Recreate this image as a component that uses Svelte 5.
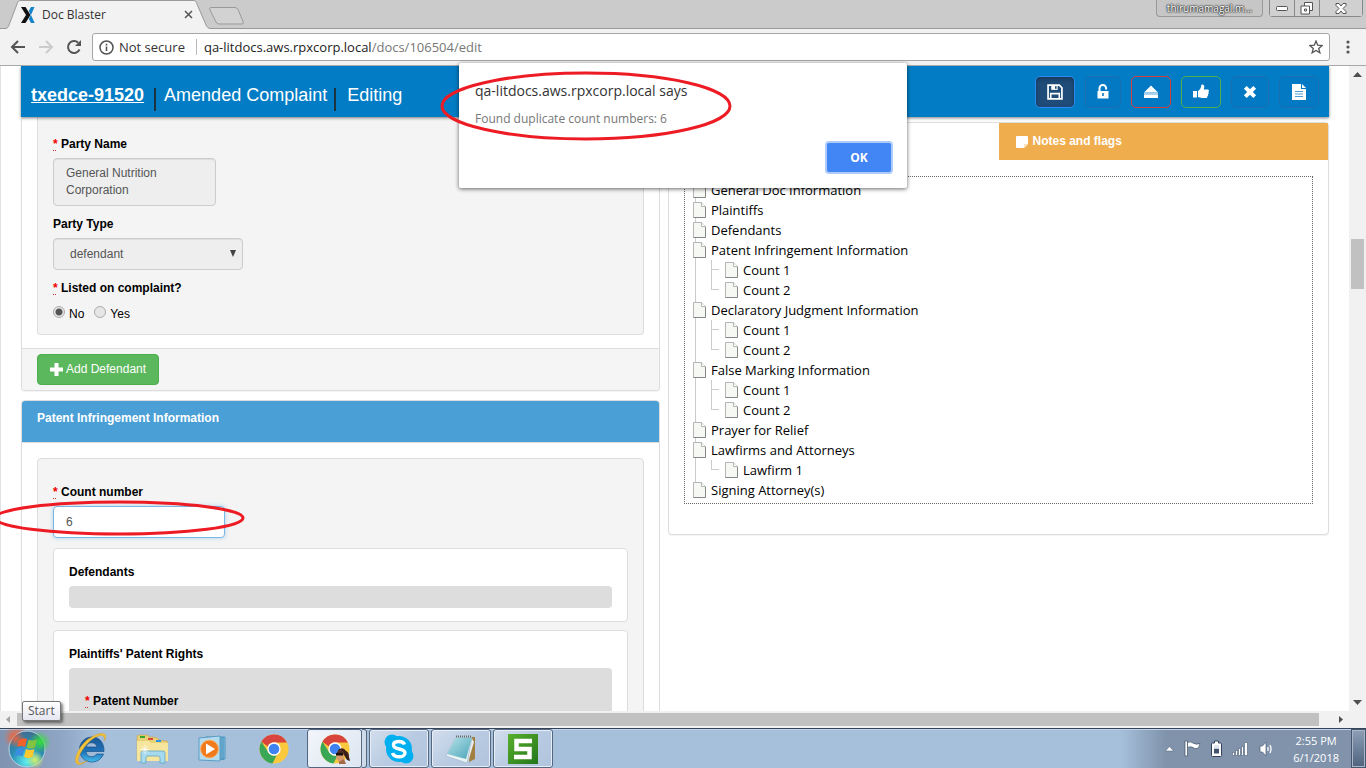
<script>
  const tree = [
    { label: 'General Doc Information', children: [] },
    { label: 'Plaintiffs', children: [] },
    { label: 'Defendants', children: [] },
    { label: 'Patent Infringement Information', children: ['Count 1', 'Count 2'] },
    { label: 'Declaratory Judgment Information', children: ['Count 1', 'Count 2'] },
    { label: 'False Marking Information', children: ['Count 1', 'Count 2'] },
    { label: 'Prayer for Relief', children: [] },
    { label: 'Lawfirms and Attorneys', children: ['Lawfirm 1'] },
    { label: 'Signing Attorney(s)', children: [] }
  ];
  let listed = $state('No');
  let countNumber = $state('6');
</script>

{#snippet page()}
  <svg class="leaf" width="13" height="16" viewBox="0 0 13 16">
    <path d="M.5.5h8l4 4v11H.5z" fill="#f6f8f3" stroke="#b5b5b5" />
    <path d="M.5 15.5h12V5" fill="none" stroke="#868686" />
    <path d="M8.500 .5v4h4" fill="#fff" stroke="#b5b5b5" />
  </svg>
{/snippet}

{#snippet chrome()}
  <svg width="30" height="30" viewBox="0 0 30 30">
    <circle cx="15" cy="15" r="14.500" fill="#fbc93d" />
    <path d="M2.440 7.750A14.500 14.500 0 0 1 27.900 8.400H15a6.600 6.600 0 0 0-6.100 4.100z" fill="#d9453c" />
    <path d="M2.440 7.750 9.300 18.300a6.600 6.600 0 0 0 8.500 2.700l-4.300 8.420A14.500 14.500 0 0 1 2.440 7.750z" fill="#3aa757" />
    <circle cx="15" cy="15" r="6.700" fill="#fff" />
    <circle cx="15" cy="15" r="5.300" fill="#3f83f3" />
  </svg>
{/snippet}

<div class="screen">
  <header class="tabstrip">
    <div class="tab">
      <svg class="tabshape" width="206" height="29" viewBox="0 0 206 29">
        <path d="M0 28.500C3 28.500 3 27 4 25L12 4C13 1 14 .5 16 .5H188C190 .5 191 1 192 4L201 25C202 27 203 28.500 206 28.500V29H0z" fill="#f2f2f2" />
        <path d="M0 28.500C3 28.500 3 27 4 25L12 4C13 1 14 .5 16 .5H188C190 .5 191 1 192 4L201 25C202 27 203 28.500 206 28.500" fill="none" stroke="#999" />
      </svg>
      <svg width="15" height="16" viewBox="0 0 15 16">
        <path d="M0 0h4.500l5 8-5 8H0l5-8z" fill="#111" />
        <path d="M13.500 0H10L7.800 4l2 4-2 4 2.200 4h3.700L10 8z" fill="#1583c9" />
      </svg>
      <span class="tabname">Doc Blaster</span>
      <button class="plain" aria-label="Close tab">
        <svg width="9" height="9" viewBox="0 0 9 9"><path d="M1 1l7 7M8 1L1 8" stroke="#555" stroke-width="1.500" /></svg>
      </button>
    </div>
    <button class="plain newtab" aria-label="New tab">
      <svg width="35" height="18" viewBox="0 0 35 18"><path d="M2 .5h24q2 0 3 2l5 12q1 2.500-1 2.500H10q-2 0-3-2L1 3Q0 .5 2 .5z" fill="#d2d2d2" stroke="#999" /></svg>
    </button>
    <button class="user">thirumamagal.m...</button>
    <div class="winctl">
      <button aria-label="Minimize"><svg width="13" height="6" viewBox="0 0 13 6"><rect x=".5" y="1.500" width="11" height="4" rx="1" fill="#fff" stroke="#555" /></svg></button>
      <button aria-label="Restore"><svg width="14" height="13" viewBox="0 0 14 13"><path d="M4.500.5h8v8h-3v3.500h-8.500v-8h3.500z" fill="#fff" stroke="#555" /><path d="M4.500 4h5v5M4.500 7h2v2h-2z" fill="none" stroke="#555" /></svg></button>
      <button class="wide" aria-label="Close"><svg width="12" height="11" viewBox="0 0 12 11"><path d="M1 .5h3l2 2.500 2-2.500h3v2L8 5.500l3 3v2H8L6 8l-2 2.500H1v-2l3-3-3-3z" fill="#fff" stroke="#555" /></svg></button>
    </div>
  </header>

  <div class="toolbar">
    <button class="plain" aria-label="Back"><svg width="16" height="16" viewBox="0 0 16 16"><path d="M15 8H2.500M8 2L2 8l6 6" fill="none" stroke="#555" stroke-width="2" /></svg></button>
    <button class="plain" aria-label="Forward"><svg width="16" height="16" viewBox="0 0 16 16"><path d="M1 8h12.500M8 2l6 6-6 6" fill="none" stroke="#ccc" stroke-width="2" /></svg></button>
    <button class="plain" aria-label="Reload"><svg width="16" height="16" viewBox="0 0 16 16"><path d="M13.500 10.500A6 6 0 1 1 12.200 3.700" fill="none" stroke="#555" stroke-width="2" /><path d="M15 1v6H9z" fill="#555" /></svg></button>
    <div class="omnibox">
      <svg width="15" height="15" viewBox="0 0 15 15"><circle cx="7.500" cy="7.500" r="6.500" fill="none" stroke="#555" stroke-width="1.500" /><path d="M7.500 6.500v4.500M7.500 3.800v1.700" stroke="#555" stroke-width="1.600" /></svg>
      <span class="insecure">Not secure</span>
      <span class="url">qa-litdocs.aws.rpxcorp.local<i>/docs/106504/edit</i></span>
      <svg class="star" width="14" height="14" viewBox="0 0 14 14"><path d="M7 1l1.700 4.200 4.500.3-3.500 2.900 1.200 4.400L7 10.400l-3.900 2.400 1.200-4.400L.8 5.500l4.500-.3z" fill="none" stroke="#555" stroke-width="1.300" /></svg>
    </div>
    <button class="plain" aria-label="Menu"><svg width="4" height="14" viewBox="0 0 4 14" fill="#555"><circle cx="2" cy="2" r="1.600" /><circle cx="2" cy="7" r="1.600" /><circle cx="2" cy="12" r="1.600" /></svg></button>
  </div>

  <div class="view">
    <div class="docs">
      <div class="bluebar">
        <h1><a href="#case">txedce-91520</a><span class="pipe"></span><span class="kind">Amended Complaint</span><span class="pipe"></span><span class="mode">Editing</span></h1>
        <div class="tools">
          <button class="tool save" aria-label="Save"><svg width="16" height="16" viewBox="0 0 15 15"><path d="M1 1h10.500L14 3.500V14H1z" fill="none" stroke="#fff" stroke-width="1.600" /><path d="M4 1h6v4.500H4z" fill="#fff" /><path d="M7.500 2h1.500v2.500H7.500z" fill="#1c4a78" /><path d="M3.500 14V9h8v5" fill="none" stroke="#fff" stroke-width="1.500" /></svg></button>
          <button class="tool lock" aria-label="Unlock"><svg width="12" height="15" viewBox="0 0 12 15"><path d="M2.500 8V4.300a3.300 3.300 0 0 1 6.600 0V5.500" fill="none" stroke="#fff" stroke-width="2" /><path d="M.5 7h11v7.500H.5z" fill="#fff" /><path d="M5.200 9h1.600v3H5.200z" fill="#0a75bd" /></svg></button>
          <button class="tool red" aria-label="Eject"><svg width="16" height="14" viewBox="0 0 16 14"><path d="M8 .5l7 7H1zM1 10h14v3H1z" fill="#fff" /><path d="M1 7.500h14V10H1z" fill="#a9d3ee" /></svg></button>
          <button class="tool green" aria-label="Approve"><svg width="16" height="15" viewBox="0 0 16 15"><path d="M0 7h4v6.500H0zM5 7c2-1 3-3 3.200-5.500C8.300 0 11.500 0 11.300 3L10.800 5.500H15c1.500.5 1 2 .3 2.500.7.700.5 1.800-.3 2.200.5.900 0 1.600-.6 1.900.2 1.400-.7 1.900-1.600 1.900H9c-1.500 0-2.500-.8-4-1z" fill="#fff" /></svg></button>
          <button class="tool cancel" aria-label="Cancel"><svg width="14" height="14" viewBox="0 0 14 14"><path d="M2.300 2.300l9.400 9.400M11.700 2.300l-9.400 9.400" stroke="#fff" stroke-width="4" /></svg></button>
          <button class="tool" aria-label="Document"><svg width="14" height="16" viewBox="0 0 14 16"><path d="M0 0h9v5h5v11H0zM10 0l4 4h-4z" fill="#fff" /><path d="M3 7.500h8M3 10h8M3 12.500h8" stroke="#4a9fd6" /></svg></button>
        </div>
      </div>

      <div class="columns">
        <main class="left">
          <section class="panel cut">
            <div class="well cut">
              <label for="pname"><abbr>*</abbr> Party Name</label>
              <textarea id="pname" disabled>General Nutrition Corporation</textarea>
              <label for="ptype">Party Type</label>
              <div class="pick">
                <select id="ptype" disabled><option>defendant</option></select>
                <svg width="6" height="7" viewBox="0 0 6 7"><path d="M0 0h6L3 7z" fill="#444" /></svg>
              </div>
              <fieldset>
                <legend><abbr>*</abbr> Listed on complaint?</legend>
                <div class="radios">
                  {#each ['No', 'Yes'] as option}
                    <label><input type="radio" name="listed" value={option} bind:group={listed} />{option}</label>
                  {/each}
                </div>
              </fieldset>
            </div>
            <footer>
              <button class="add"><svg width="13" height="13" viewBox="0 0 13 13"><path d="M6.500 0v13M0 6.500h13" stroke="#fff" stroke-width="4" /></svg>Add Defendant</button>
            </footer>
          </section>

          <section class="panel">
            <h2>Patent Infringement Information</h2>
            <div class="inner">
              <div class="well">
                <label for="cnum"><abbr>*</abbr> Count number</label>
                <input id="cnum" class="count" type="text" bind:value={countNumber} />
                <div class="card">
                  <h3>Defendants</h3>
                  <div class="bar"></div>
                </div>
                <div class="card">
                  <h3>Plaintiffs' Patent Rights</h3>
                  <div class="bar tall"><h3><abbr>*</abbr> Patent Number</h3></div>
                </div>
              </div>
            </div>
          </section>
        </main>

        <aside class="panel right">
          <nav class="tabs">
            <span></span>
            <a href="#notes"><svg width="12" height="12" viewBox="0 0 12 12"><path d="M1 0h10a1 1 0 0 1 1 1v7L8 12H1a1 1 0 0 1-1-1V1a1 1 0 0 1 1-1z" fill="#fff" /><path d="M8 12V8h4z" fill="#fbe3bf" /></svg>Notes and flags</a>
          </nav>
          <div class="treebox">
            <ul class="tree">
              {#each tree as node}
                <li>
                  <div class="row">{@render page()}{node.label}</div>
                  {#if node.children.length}
                    <ul>
                      {#each node.children as child}
                        <li><div class="row">{@render page()}{child}</div></li>
                      {/each}
                    </ul>
                  {/if}
                </li>
              {/each}
            </ul>
          </div>
        </aside>
      </div>
    </div>
    <div class="vscroll">
      <svg width="9" height="5" viewBox="0 0 9 5"><path d="M0 5h9L4.500 0z" fill="#505050" /></svg>
      <div class="track"><div class="thumb"></div></div>
      <svg width="9" height="5" viewBox="0 0 9 5"><path d="M0 0h9L4.500 5z" fill="#505050" /></svg>
    </div>
  </div>
  <div class="hscroll">
    <svg width="4" height="7" viewBox="0 0 4 7"><path d="M4 0v7L0 3.500z" fill="#a3a3a3" /></svg>
    <div class="thumb"></div>
    <svg width="4" height="7" viewBox="0 0 4 7"><path d="M0 0v7l4-3.500z" fill="#505050" /></svg>
  </div>

  <footer class="taskbar">
    <button class="task start" aria-label="Start">
      <svg width="54" height="40" viewBox="0 0 54 40">
        <defs>
          <radialGradient id="orb" cx=".5" cy=".85" r=".9"><stop offset="0" stop-color="#5ff0f0" /><stop offset=".5" stop-color="#2b8db4" /><stop offset="1" stop-color="#45688c" /></radialGradient>
          <radialGradient id="glowr"><stop offset="0" stop-color="#f0643a" stop-opacity=".9" /><stop offset="1" stop-color="#f0643a" stop-opacity="0" /></radialGradient>
          <radialGradient id="glowg"><stop offset="0" stop-color="#35e23a" /><stop offset="1" stop-color="#35e23a" stop-opacity="0" /></radialGradient>
          <radialGradient id="glowy"><stop offset="0" stop-color="#d8ee62" /><stop offset="1" stop-color="#d8ee62" stop-opacity="0" /></radialGradient>
        </defs>
        <circle cx="16" cy="8" r="13" fill="url(#glowr)" />
        <circle cx="27" cy="20" r="18" fill="url(#orb)" stroke="#b9d4e2" />
        <circle cx="16" cy="10" r="9" fill="url(#glowr)" />
        <circle cx="40" cy="13" r="11" fill="url(#glowg)" />
        <circle cx="35" cy="31" r="9" fill="url(#glowy)" />
        <path d="M19 11q4-3 8-1l-2 8q-4-2-8 0z" fill="#f2602c" />
        <path d="M28.500 10.500q4 2 8.500 0l-2 8q-4 2-8.500 0z" fill="#83c341" />
        <path d="M16.500 20q4-2.500 8-.5l-2 8q-4-2.500-8 0z" fill="#3b8de0" />
        <path d="M26 20q4 2 8.500 0l-2 8q-4 2-8.500 0z" fill="#fdc92e" />
      </svg>
    </button>
    <button class="task" aria-label="Internet Explorer">
      <svg width="32" height="32" viewBox="0 0 32 32">
        <defs><linearGradient id="ie" x2="0" y2="1"><stop offset="0" stop-color="#1b5796" /><stop offset=".6" stop-color="#1f74ba" /><stop offset="1" stop-color="#45bdec" /></linearGradient></defs>
        <path d="M29 18.500H11c.3 6 8 7 10.500 2.500h7C26 27.500 20.500 29 17 29 9 29 4.500 23 4.500 16.500S9.500 4 17 4s12.500 6 12 14.500zM11.200 14h10.600c-.5-5.500-9.600-5.700-10.600 0z" fill="url(#ie)" stroke="#1d5288" stroke-width=".7" />
        <path d="M12.500 6.500C22 0 29-1 30.500 2c.8 1.500 0 4-1.500 6 .5-2 .5-4-.8-5-3-2-11 2-17 9S1.500 27 4 29.500c1.500 1.300 5 0 8.500-2C8 31 3.500 32.500 1.500 30.500-2.500 26 5 12.500 12.500 6.500z" fill="#f3c13a" stroke="#c99524" stroke-width=".4" />
      </svg>
    </button>
    <button class="task" aria-label="File Explorer">
      <svg width="32" height="30" viewBox="0 0 32 30">
        <path d="M1 3q0-2 2-2h8q2 0 2 2h3q6 0 7 3l7 1q2 0 2 2v17H1z" fill="#e9cf75" stroke="#c3a24b" stroke-width=".6" />
        <path d="M4 2h5v2H4z" fill="#35a82f" /><path d="M12 4h5v2h-5z" fill="#d9463a" /><path d="M20 6h5v2h-5z" fill="#2b95df" />
        <path d="M1 7h12l2 2h17v18H1z" fill="#f6e59c" />
        <path d="M5 29V19q0-2 2-2h20q2 0 2 2v10h-5v-5q0-2-2-2H12q-2 0-2 2v5z" fill="#a5daef" stroke="#5a9dbd" stroke-width=".7" />
        <path d="M9 11v9M4.500 15.500h9M6 12.500l6 6M12 12.500l-6 6" stroke="#fff" stroke-width=".8" />
      </svg>
    </button>
    <button class="task" aria-label="Media Player">
      <svg width="30" height="28" viewBox="0 0 30 28">
        <path d="M8 2h19v22H8z" fill="#8ac5e3" stroke="#4d95bf" /><path d="M23 2v23M25 2v23" stroke="#3a86b5" />
        <path d="M1 3l21-2v25L1 25z" fill="#b4dcf0" stroke="#5b9dc4" />
        <circle cx="11.500" cy="14" r="9" fill="#f07b1d" stroke="#f8b676" />
        <path d="M8 8.500l9 5.500-9 5.500z" fill="#fff" />
      </svg>
    </button>
    <button class="task" aria-label="Chrome">{@render chrome()}</button>
    <div class="open">
      <button class="task active" aria-label="Chrome, Doc Blaster">
        {@render chrome()}
        <svg class="face" width="15" height="16" viewBox="0 0 15 16">
          <path d="M3 2q5-4 8 1 3 1 3 6l1 4-3-1-3-5-5-2z" fill="#3c2019" />
          <path d="M2 4q4-3 6 0l1 5-1 6H4l-1-3-2-1z" fill="#d99b6c" /><path d="M1 5h7v2.500H1z" fill="#17110f" /><path d="M2 4q3-3 7 0l-1 1H2z" fill="#4d2a1d" /><path d="M4 14l5-3 2 5H4z" fill="#a46a47" />
        </svg>
      </button>
      <span class="stack"></span>
    </div>
    <button class="task framed" aria-label="Skype">
      <svg width="30" height="30" viewBox="0 0 30 30"><circle cx="15" cy="15" r="13" fill="#00aff0" /><circle cx="8" cy="8" r="7.500" fill="#00aff0" /><circle cx="22" cy="22" r="7.500" fill="#00aff0" /><path d="M20.500 10.500C19 6.500 9.500 6.500 9.500 11c0 5.500 11.500 2.500 11.500 8 0 5-11 5-12.500 0" fill="none" stroke="#fff" stroke-width="3.400" /></svg>
    </button>
    <button class="task framed" aria-label="Notepad">
      <svg width="32" height="30" viewBox="0 0 32 30">
        <defs><linearGradient id="note" x2="1" y2="1"><stop offset="0" stop-color="#b9e3ea" /><stop offset="1" stop-color="#4ba4b8" /></linearGradient></defs>
        <path d="M26 3h4v22l-6 3z" fill="#a2803f" /><path d="M26 3l3 5-6 20z" fill="#e9eef0" />
        <path d="M11 3l16 1-5 25L1 22z" fill="#e8f3f5" stroke="#9ab" stroke-width=".5" />
        <path d="M11 3l16 1-6 21L2 20z" fill="url(#note)" /><path d="M11 2.500h16" stroke="#6d6d6d" stroke-width="2" stroke-dasharray="1 1" />
      </svg>
    </button>
    <button class="task framed" aria-label="Screenshot tool">
      <svg width="30" height="30" viewBox="0 0 30 30"><defs><linearGradient id="snag" x2="1" y2="1"><stop offset="0" stop-color="#58b02c" /><stop offset="1" stop-color="#24761b" /></linearGradient></defs><path d="M0 0h30v30H0z" fill="url(#snag)" /><path d="M24 7H8.500v8H21.500v8H6" fill="none" stroke="#fff" stroke-width="4.500" /></svg>
    </button>
    <div class="tray">
      <svg width="9" height="6" viewBox="0 0 9 6"><path d="M4.500.5l4 4.500h-8z" fill="#fff" stroke="#55677f" stroke-width=".5" /></svg>
      <svg width="17" height="17" viewBox="0 0 17 17"><path d="M1 1h2.500v15H1z" fill="#fff" stroke="#3f5066" stroke-width=".7" /><path d="M3.500 2.500q3-1.500 5.500.5 3 2 7 .5-.5 4-3 5-2.500.5-4-1-2.500-1.500-5.500 0z" fill="#fff" stroke="#3f5066" stroke-width=".7" /></svg>
      <svg width="11" height="17" viewBox="0 0 11 17"><path d="M3.500 1h4v2h2q1 0 1 1v11.500q0 1-1 1h-8q-1 0-1-1V4q0-1 1-1h2z" fill="#fff" stroke="#33445a" /><path d="M3 8.500h5v5H3z" fill="#41546c" /><path d="M3 5h5v3.500H3z" fill="#dfe6ee" /></svg>
      <svg width="17" height="14" viewBox="0 0 17 14"><path d="M.5 10.500h2v3h-2zM3.500 8.500h2v5h-2zM6.500 6.500h2v7h-2zM9.500 4.500h2v9h-2zM12.500.5h3v13h-3z" fill="#fff" stroke="#4c5e76" stroke-width=".6" /></svg>
      <svg width="14" height="16" viewBox="0 0 14 16"><path d="M1 5h2.500L7 1v14l-3.500-4H1z" fill="#fff" stroke="#4c5e76" stroke-width=".7" /><path d="M9 6v4M11 4q2 4 0 8" fill="none" stroke="#fff" stroke-width="1.300" /></svg>
      <div class="clock"><span>2:55 PM</span><span>6/1/2018</span></div>
      <button class="peek" aria-label="Show desktop"></button>
    </div>
  </footer>

  <div class="dialog" role="alertdialog" aria-labelledby="dlgt">
    <h2 id="dlgt">qa-litdocs.aws.rpxcorp.local says</h2>
    <p>Found duplicate count numbers: 6</p>
    <button>OK</button>
  </div>
  <svg class="mark one" width="292" height="70" viewBox="0 0 292 70"><ellipse cx="146" cy="35" rx="144" ry="33" /></svg>
  <svg class="mark two" width="252" height="38" viewBox="0 0 252 38"><ellipse cx="126" cy="19" rx="124" ry="16" /></svg>
  <div class="tip">Start</div>
</div>

<style>
  :global(body) { margin: 0; overflow: hidden; }
  .screen { position: relative; display: flex; flex-direction: column; height: 100vh; overflow: hidden; background: #fff; font: 12px/17px "Liberation Sans", Arial, sans-serif; color: #000; }
  .screen *, .screen *::before { box-sizing: border-box; }
  svg { display: block; flex: none; }
  button { font: inherit; margin: 0; padding: 0; }
  .plain { display: flex; border: 0; background: none; }
  h1, h2, h3, p, ul { margin: 0; padding: 0; }
  h2, h3 { font-size: 12px; }

  .tabstrip { display: flex; align-items: flex-start; height: 29px; flex: none; background: #cbcbcb; border-bottom: 1px solid #999; padding: 0 3px 0 5px; font-family: "Open Sans", sans-serif; }
  .tab { position: relative; display: flex; align-items: center; width: 204px; height: 29px; padding: 0 16px; gap: 6px; }
  .tab > * { position: relative; }
  .tab > .tabshape { position: absolute; left: 0; top: 0; }
  .tabname { flex: 1; color: #333; }
  .newtab { padding-top: 7px; }
  .user { margin-left: auto; width: 107px; height: 17px; border: 1px solid #999; border-top: 0; border-radius: 0 0 4px 4px; background: #c6c6c6; color: #fff; text-shadow: 0 0 2px #222, 0 0 2px #222, 0 0 1px #333; font-size: 10px; line-height: 15px; }
  .winctl { display: flex; margin-left: 6px; height: 17px; border: 1px solid #888; border-top: 0; border-radius: 0 0 4px 4px; }
  .winctl button { display: grid; place-items: center; width: 25px; border: 0; border-right: 1px solid #888; background: #d0d0d0; }
  .winctl .wide { width: 42px; border-right: 0; }

  .toolbar { display: flex; align-items: center; flex: none; height: 37px; padding: 0 16px 0 10px; gap: 12px; background: #f2f2f2; border-bottom: 1px solid #a9a9a9; font: 13px/18px "Open Sans", sans-serif; }
  .omnibox { display: flex; align-items: center; flex: 1; height: 28px; margin-left: -2px; margin-right: 4px; padding: 0 6px; border: 1px solid #a6a6a6; border-radius: 3px; background: #fff; }
  .insecure { margin-left: 5px; padding-right: 11px; border-right: 1px solid #bbb; line-height: 16px; color: #333; }
  .url { margin-left: 7px; flex: 1; color: #222; }
  .url i { font-style: normal; color: #777; }

  .view { display: flex; flex: 1; min-height: 0; }
  .docs { flex: 1; min-width: 0; padding: 0 20px; border-left: 1px solid #e2e2e2; overflow: hidden; }
  .bluebar { position: relative; z-index: 1; display: flex; align-items: center; justify-content: space-between; height: 51px; padding: 0 10px; background: #027dc5; box-shadow: 0 1px 3px rgba(0, 0, 0, .5); }
  h1 { display: flex; align-items: center; font-size: 18px; line-height: 24px; font-weight: 400; color: #fff; padding-top: 6px; }
  h1 a { margin-right: 10px; font-weight: 700; color: #fff; }
  .kind { margin: 0 7px 0 8px; }
  .mode { margin-left: 11px; }
  .pipe { width: 2px; height: 23px; margin-top: 10px; background: #1c3440; }
  .tools { display: flex; gap: 10px; }
  .tool { display: grid; place-items: center; width: 40px; height: 32px; border: 1px solid #1b6fb1; border-radius: 5px; background: #0379c4; }
  .lock { width: 36px; }
  .cancel { width: 38px; }
  .tool.save { background: #1f4c78; border-color: #2c8af0; box-shadow: inset 0 2px 4px rgba(0, 0, 0, .3); }
  .tool.red { border-color: #d43f3a; }
  .tool.green { border-color: #4cae4c; }

  .columns { display: grid; grid-template-columns: 639fr 661fr; gap: 8px; align-items: start; }
  .panel { border: 1px solid #ddd; border-radius: 4px; background: #fff; box-shadow: 0 1px 1px rgba(0, 0, 0, .05); margin-bottom: 9px; }
  .panel.cut { border-top: 0; }
  .well { border: 1px solid #ddd; border-radius: 4px; background: #f4f4f4; padding: 25px 15px 0; }
  .well.cut { margin: 0 15px 13px; border-top: 0; border-radius: 0 0 4px 4px; padding: 19px 15px 11px; }
  .well > label, legend, h3 { display: block; font-weight: 700; margin: 0 0 5px; padding: 0; }
  abbr { color: #e00; text-decoration: underline dotted #c33; text-underline-offset: 2px; }
  textarea, select, .count { display: block; margin: 0 0 10px; border: 1px solid #ccc; border-radius: 4px; background: #eee; color: #555; font: inherit; box-shadow: inset 0 1px 1px rgba(0, 0, 0, .075); }
  textarea { width: 163px; height: 48px; padding: 6px 12px; resize: none; overflow: hidden; }
  .pick { position: relative; width: 190px; }
  select { width: 100%; height: 32px; padding: 0 16px; appearance: none; opacity: 1; }
  .pick svg { position: absolute; right: 7px; top: 12px; }
  fieldset { border: 0; margin: 0; padding: 0; min-width: 0; }
  .radios { display: flex; gap: 10px; padding-top: 4px; }
  .radios label { display: flex; align-items: flex-start; gap: 4px; }
  .radios input { appearance: none; width: 12px; height: 12px; margin: 0; border: 1px solid #aaa; border-radius: 50%; background: #e6e6e6; }
  .radios input:checked { background: radial-gradient(circle, #555 3px, #e6e6e6 4px); }
  .panel footer { padding: 5px 15px; background: #f5f5f5; border-top: 1px solid #ddd; border-radius: 0 0 4px 4px; }
  .add { display: flex; align-items: center; gap: 3px; height: 31px; padding: 0 12px; border: 1px solid #4cae4c; border-radius: 4px; background: #5cb85c; color: #fff; }
  .panel h2 { padding: 9px 15px 15px; background: #4a9fd6; border-bottom: 1px solid #ddd; border-radius: 3px 3px 0 0; color: #fff; }
  .inner { padding: 15px; }
  .count { width: 172px; height: 32px; padding: 0 12px; border-color: #79b6e4; background: #fff; box-shadow: 0 0 4px rgba(102, 175, 233, .5); }
  .card { border: 1px solid #ddd; border-radius: 4px; background: #fff; padding: 15px 15px 13px; margin-bottom: 8px; }
  .bar { height: 22px; border-radius: 4px; background: #ddd; }
  .bar.tall { height: 120px; padding: 25px 16px; }

  .right { margin-top: 5px; padding-bottom: 30px; margin-bottom: 0; }
  .tabs { display: grid; grid-template-columns: 1fr 1fr; }
  .tabs a { display: flex; align-items: center; gap: 5px; height: 37px; padding: 0 17px; background: #f0ad4e; color: #fff; font-weight: 700; text-decoration: none; }
  .treebox { margin: 16px 15px 0; padding: 3px 8px; border: 1px dotted #666; }
  .tree { font: 13px/20px "Open Sans", sans-serif; }
  .tree, .tree ul { list-style: none; }
  .tree li { position: relative; }
  .tree > li::before { content: ""; position: absolute; left: 2px; top: 10px; bottom: -10px; border-left: 1px solid #ccc; }
  .tree > li:last-child::before { display: none; }
  .tree ul li { padding-left: 32px; }
  .tree ul li::before { content: ""; position: absolute; left: 18px; top: 0; bottom: 0; width: 8px; border-left: 1px solid #ccc; }
  .tree ul li:last-child::before { bottom: 10px; border-bottom: 1px solid #ccc; }
  .tree ul li:not(:last-child)::before { background: linear-gradient(#ccc, #ccc) 0 9px / 8px 1px no-repeat; }
  .row { position: relative; display: flex; align-items: center; gap: 5px; height: 20px; white-space: nowrap; }

  .vscroll { display: flex; flex-direction: column; align-items: center; width: 17px; padding: 6px 0; background: #f1f1f1; }
  .track { flex: 1; width: 100%; display: flex; flex-direction: column; padding-top: 162px; align-items: center; }
  .vscroll .thumb { width: 13px; height: 50px; background: #c1c1c1; }
  .hscroll { display: flex; align-items: center; flex: none; height: 17px; padding: 0 23px 0 6px; gap: 7px; background: #f1f1f1; }
  .hscroll .thumb { flex: 1; height: 13px; margin-right: 13px; background: #c1c1c1; }

  .taskbar { display: flex; flex: none; height: 40px; border-top: 1px solid #34435a; background: linear-gradient(90deg, #7f93b0 0, #8ea5c3 60px, #a6c0dc 100px, #a6c0dc calc(100% - 246px), #8093ab calc(100% - 200px), #8093ab 100%); box-shadow: inset 0 1px #c3d5e8; }
  .task { display: grid; place-items: center; width: 61px; height: 39px; border: 0; background: none; }
  .start { width: 60px; padding-right: 6px; }
  .open { display: flex; margin: 0 2px 0 3px; }
  .task.active, .framed { border: 1px solid #55677f; border-radius: 3px; box-shadow: inset 0 0 0 1px #e7eef7; background: linear-gradient(135deg, #d3deed, #b9cbe2 50%, #b0c4dd); }
  .task.active { position: relative; width: 55px; background: linear-gradient(135deg, #f3f6fb, #dce5f1); }
  .face { position: absolute; right: 11px; bottom: 3px; }
  .stack { width: 5px; border: 1px solid #55677f; border-left: 0; border-radius: 0 3px 3px 0; background: #cddbea; }
  .framed { width: 60px; margin-right: 2px; }
  .tray { display: flex; align-items: center; gap: 10px; margin-left: auto; }
  .clock { display: flex; flex-direction: column; align-items: center; margin: 0 2px 0 10px; font: 11px/17px "Open Sans", sans-serif; color: #fff; }
  .peek { align-self: stretch; width: 15px; border: 1px solid #45566d; box-shadow: inset 0 0 0 1px #a8b6c8; background: linear-gradient(#8d9eb5, #4f637e); }

  .dialog { position: absolute; z-index: 3; left: 459px; top: 63px; width: 448px; height: 125px; padding: 18px 16px; border-radius: 2px; background: #fff; box-shadow: 0 1px 4px rgba(0, 0, 0, .6); font-family: "Open Sans", sans-serif; }
  .dialog h2 { font-size: 14px; line-height: 20px; font-weight: 400; color: #333; }
  .dialog p { margin-top: 9px; font-size: 12px; line-height: 17px; color: #777; }
  .dialog button { display: block; width: 64px; height: 29px; margin: 16px 0 0 auto; border: 0; border-radius: 2px; background: #4285f4; box-shadow: 0 0 0 2px #aecbfa; color: #fff; font-weight: 700; }
  .mark { position: absolute; z-index: 4; fill: none; stroke: #ed1c24; stroke-width: 3px; }
  .one { left: 440px; top: 71px; }
  .two { left: -7px; top: 499px; }
  .tip { position: absolute; z-index: 4; left: 22px; top: 701px; padding: 0 5px; border: 1px solid #767676; border-radius: 2px; background: linear-gradient(#fff, #e5e6f1); box-shadow: 2px 2px 3px rgba(0, 0, 0, .5); color: #555; font: 12px/18px "Open Sans", sans-serif; }
</style>
